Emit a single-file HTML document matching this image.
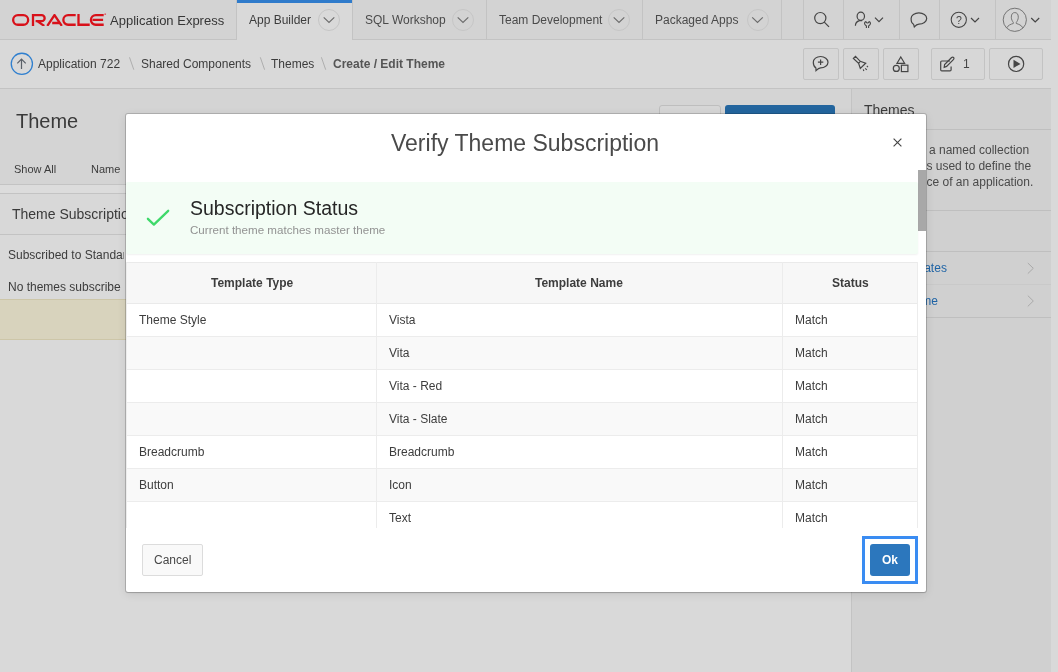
<!DOCTYPE html>
<html><head><meta charset="utf-8">
<style>
*{box-sizing:border-box;margin:0;padding:0}
html,body{width:1058px;height:672px;overflow:hidden}
body{position:relative;will-change:transform;background:#d9d9d9;font-family:"Liberation Sans",sans-serif;color:#3c3c3c}
.a{position:absolute;white-space:nowrap;line-height:1}
.hdr{position:absolute;left:0;top:0;width:1051px;height:40px;background:#d3d3d3;border-bottom:1px solid #c3c3c3}
.vsep{position:absolute;top:0;width:1px;height:39px;background:#c3c3c3}
.tab{position:absolute;top:0;height:40px}
.circ{position:absolute;width:22px;height:22px;border:1px solid #c6c6c6;border-radius:50%;top:9px}
.strip{position:absolute;left:1051px;top:0;width:7px;height:672px;background:#d9d9d9}
.bc{position:absolute;left:0;top:40px;width:1051px;height:49px;background:#d9d9d9;border-bottom:1px solid #c3c3c3}
.btn{position:absolute;top:48px;height:32px;border:1px solid #c3c3c3;border-radius:2px;background:#d7d7d7}
.side{position:absolute;left:851px;top:89px;width:200px;height:583px;background:#d0d0d0;border-left:1px solid #c3c3c3}
.hl{position:absolute;height:1px;background:#c3c3c3}
.modal{position:absolute;left:126px;top:114px;width:800px;height:478px;background:#fff;border-radius:2px;box-shadow:0 0 0 1px rgba(0,0,0,.17),0 1px 2px rgba(0,0,0,.1),0 2px 10px rgba(0,0,0,.1)}
.m{position:absolute;white-space:nowrap;line-height:1}
.cell{position:absolute;font-size:12px;line-height:1;color:#3d3d3d}
</style></head><body>
<div class="strip"></div>
<!-- header -->
<div class="hdr">
    <div class="a" style="left:110px;top:14px;font-size:13px;color:#363636">Application Express</div>
  <div class="tab" style="left:236px;width:117px;background:#d9d9d9;height:40px;border-left:1px solid #c3c3c3;border-right:1px solid #c3c3c3">
    <div style="position:absolute;left:0;right:0;top:0;height:3px;background:#2f7bcb"></div>
  </div>
  <div class="a" style="left:249px;top:14px;font-size:12px;color:#3c3c3c">App Builder</div>
  <div class="a" style="left:365px;top:14px;font-size:12px;color:#4a4a4a">SQL Workshop</div>
  <div class="vsep" style="left:486px"></div>
  <div class="a" style="left:499px;top:14px;font-size:12px;color:#4a4a4a">Team Development</div>
  <div class="vsep" style="left:642px"></div>
  <div class="a" style="left:655px;top:14px;font-size:12px;color:#4a4a4a">Packaged Apps</div>
  <div class="vsep" style="left:781px"></div>
  <div class="vsep" style="left:803px"></div>
  <div class="vsep" style="left:843px"></div>
  <div class="vsep" style="left:899px"></div>
  <div class="vsep" style="left:939px"></div>
  <div class="vsep" style="left:995px"></div>
</div>
<!-- breadcrumb -->
<div class="bc"></div>
<div class="a" style="left:38px;top:58px;font-size:12px;color:#3c3c3c">Application 722</div>
<div class="a" style="left:141px;top:58px;font-size:12px;color:#3c3c3c">Shared Components</div>
<div class="a" style="left:271px;top:58px;font-size:12px;color:#3c3c3c">Themes</div>
<div class="a" style="left:333px;top:58px;font-size:12px;font-weight:bold;color:#555">Create / Edit Theme</div>
<div class="btn" style="left:803px;width:36px"></div>
<div class="btn" style="left:843px;width:36px"></div>
<div class="btn" style="left:883px;width:36px"></div>
<div class="btn" style="left:931px;width:54px"></div>
<div class="btn" style="left:989px;width:54px"></div>
<svg style="position:absolute;left:0;top:0" width="1058" height="89" viewBox="0 0 1058 89">
 <defs><clipPath id="lc"><rect x="0" y="14" width="110" height="12"/></clipPath></defs>
 <g fill="none" stroke="#d8111a" stroke-width="2.3" clip-path="url(#lc)">
  <rect x="13.15" y="15.15" width="15" height="9.6" rx="4.8"/>
  <path d="M33 25.9V15.15H41.65A3 3 0 0 1 41.65 21.15H35.6M37.2 21.15L44.3 25.9"/>
  <path d="M47.3 25.9L54.5 15.1L61.8 25.9M52.2 23H60.2"/>
  <path d="M75.7 15.15H68.15A4.8 4.8 0 0 0 68.15 24.75H75.7"/>
  <path d="M78.5 14V24.75H89.7"/>
  <path d="M103.7 15.15H95.75A4.8 4.8 0 0 0 95.75 24.75H103.7M92.6 19.9H103.1"/>
 </g>
 <circle cx="105.2" cy="14.2" r="0.9" fill="#e06066"/>
 <g fill="none" stroke="#c6c6c6" stroke-width="1">
  <circle cx="329" cy="20" r="10.5"/><circle cx="463" cy="20" r="10.5"/><circle cx="619" cy="20" r="10.5"/><circle cx="758" cy="20" r="10.5"/>
 </g>
 <g fill="none" stroke="#6c6c6c" stroke-width="1.15">
  <path d="M323.7 17.3L329 22.5L334.3 17.3"/><path d="M457.7 17.3L463 22.5L468.3 17.3"/><path d="M613.7 17.3L619 22.5L624.3 17.3"/><path d="M752.2 17.3L757.5 22.5L762.8 17.3"/>
 </g>
 <g fill="none" stroke="#454545" stroke-width="1.2">
  <circle cx="820.3" cy="18.1" r="5.6"/><path d="M824.3 22.1L829 26.8"/>
  <ellipse cx="860.8" cy="16.3" rx="3.7" ry="4.1"/><path d="M855.4 25.8C855.4 23.5 856.5 21.5 859.5 20.6L862.1 20.7"/>
  <path d="M865.9 21.4C864 22.3 864 24.8 866.4 25.9V27.9M869.1 21.4C871 22.3 871 24.8 868.6 25.9V27.9M865.9 21.4Q867.5 24.6 869.1 21.4" stroke-width="1.1"/>
  <path d="M875 17.7L879 21.7L883 17.7"/>
  <path d="M913.5 24.3C911.5 23.2 911.1 21.7 911.1 18.5C911.1 15.4 914.6 12.9 918.9 12.9C923.2 12.9 926.7 15.4 926.7 18.5C926.7 21.6 923.2 24.1 918.9 24.1C917.8 24.1 916.5 24.3 914.3 26.9C914 25.8 913.9 25 913.5 24.3Z"/>
  <circle cx="958.8" cy="19.8" r="7.6" stroke-width="1.05"/>
  <path d="M971 18L975 22L979 18"/>
  <path d="M1031.2 18L1035.2 22L1039.2 18"/>
 </g>
 <text x="958.8" y="23.6" font-family="Liberation Sans" font-size="10.5" fill="#454545" text-anchor="middle">?</text>
 <g fill="none" stroke="#6a6a6a" stroke-width="0.9">
  <circle cx="1014.8" cy="19.8" r="11.6"/>
  <path d="M1011.3 17.2C1011.3 13.9 1012.8 12.6 1014.8 12.6C1016.8 12.6 1018.3 13.9 1018.3 17.2C1018.3 19.5 1017 21.5 1016.3 22.4V23.5C1018.8 24.2 1021.5 25.2 1022.8 27.8M1013.3 22.4C1012.6 21.5 1011.3 19.5 1011.3 17.2M1013.3 22.4V23.5C1010.8 24.2 1008.1 25.2 1006.8 27.8"/>
 </g>
 <circle cx="21.85" cy="63.85" r="10.6" fill="none" stroke="#2f7fcf" stroke-width="1.3"/>
 <path d="M21.5 69V59.3M17.3 63.4L21.5 59.2L25.7 63.4" fill="none" stroke="#5a6068" stroke-width="1.2"/>
 <g fill="none" stroke="#a8a8a8" stroke-width="0.9">
  <path d="M129.5 57.3L133.8 69.7M260.3 57.3L264.6 69.7M321.4 57.3L325.7 69.7"/>
 </g>
 <g fill="none" stroke="#454545" stroke-width="1.2">
  <path d="M815.8 67.8C814 66.8 813.3 65.2 813.3 62.2C813.3 59 816.6 56.5 820.6 56.5C824.6 56.5 828 59 828 62.2C828 65.4 824.6 67.9 820.6 67.9C819.4 67.9 818.3 68.2 816 70.7C815.9 69.6 816.1 68.6 815.8 67.8Z"/>
  <path d="M820.6 59.5V64.9M817.9 62.2H823.3"/>
  <path d="M853.4 58.4L855.5 56.4L860.2 61.3L865.7 63.3L860.3 68.4L858.6 63.4ZM860.2 61.3L858.6 63.4"/>
  <path d="M866.8 65.9L868 67.1M865.2 68.3L866.8 69.9M863.2 69.4L863.9 71" stroke-width="1.1"/>
  <path d="M900.8 57L904.6 63.3H897Z"/>
  <circle cx="896.3" cy="68.4" r="3"/>
  <rect x="901.4" y="65.2" width="6.5" height="6.4"/>
  <path d="M950 61H941.8Q940.7 61 940.7 62.1V69.7Q940.7 70.8 941.8 70.8H950Q951.1 70.8 951.1 69.7V66.5"/>
  <path d="M944.2 67.3L944.6 64.5L951.6 57.5Q952.7 56.6 953.6 57.5Q954.4 58.4 953.6 59.4L946.6 66.4Z"/>
  <circle cx="1016.1" cy="63.9" r="7.6"/>
 </g>
 <path d="M1013.5 59.8L1020.5 63.9L1013.5 68Z" fill="#454545"/>
 <text x="963" y="68.2" font-family="Liberation Sans" font-size="12" fill="#454545">1</text>
</svg>
<!-- left content -->
<div style="position:absolute;left:0;top:89px;width:851px;height:95px;background:#d4d4d4"></div>
<div class="a" style="left:16px;top:111px;font-size:20px;color:#3a3a3a">Theme</div>
<div class="a" style="left:14px;top:164px;font-size:11px;color:#3c3c3c">Show All</div>
<div class="a" style="left:91px;top:164px;font-size:11px;color:#3c3c3c">Name</div>
<div class="hl" style="left:0;top:184px;width:851px"></div>
<div style="position:absolute;left:0;top:185px;width:851px;height:8px;background:#dcdcdc"></div>
<div class="hl" style="left:0;top:193px;width:851px"></div>
<div style="position:absolute;left:0;top:194px;width:851px;height:40px;background:#d8d8d8"></div>
<div class="hl" style="left:0;top:234px;width:851px"></div>
<div class="a" style="left:12px;top:207px;font-size:14px;color:#3a3a3a">Theme Subscription</div>
<div class="a" style="left:8px;top:249px;width:116px;overflow:hidden;font-size:12px;color:#3c3c3c">Subscribed to Standard</div>
<div class="a" style="left:8px;top:281px;width:113px;overflow:hidden;font-size:12px;color:#3c3c3c">No themes subscribed</div>
<div style="position:absolute;left:0;top:299px;width:851px;height:41px;background:#d8d3bd;border-top:1px solid #cdc6a8;border-bottom:1px solid #cdc6a8"></div>
<div style="position:absolute;left:659px;top:105px;width:62px;height:30px;background:#d6d6d6;border:1px solid #bebebe;border-radius:3px"></div>
<div style="position:absolute;left:725px;top:105px;width:110px;height:30px;background:#23659e;border-radius:3px"></div>
<!-- sidebar -->
<div class="side"></div>
<div class="a" style="left:864px;top:103px;font-size:14px;color:#3c3c3c">Themes</div>
<div class="hl" style="left:852px;top:129px;width:199px;background:#bfbfbf"></div>
<div class="a" style="left:929px;top:144px;font-size:12px;color:#4a4a4a">a named collection</div>
<div class="a" style="left:926.4px;top:160px;font-size:12px;color:#4a4a4a">s used to define the</div>
<div class="a" style="left:926.5px;top:176px;font-size:12px;color:#4a4a4a">ce of an application.</div>
<div class="hl" style="left:852px;top:210px;width:199px;background:#bfbfbf"></div>
<div class="hl" style="left:852px;top:251px;width:199px;background:#bfbfbf"></div>
<div class="a" style="left:892.2px;top:262px;font-size:12px;color:#1f64a6">Templates</div>
<div class="hl" style="left:852px;top:284px;width:199px;background:#c9c9c9"></div>
<div class="a" style="left:900.6px;top:295px;font-size:12px;color:#1f64a6">Theme</div>
<svg style="position:absolute;left:1026px;top:261px" width="10" height="48" viewBox="0 0 10 48"><path d="M1.8 2L7.3 7.3L1.8 12.6M1.8 34.6L7.3 40L1.8 45.4" fill="none" stroke="#a9a9a9" stroke-width="1"/></svg>
<div class="hl" style="left:852px;top:317px;width:199px;background:#bfbfbf"></div>

<!-- modal -->
<div class="modal">
  <div class="m" style="left:265px;top:18px;font-size:23px;color:#4a4a4a">Verify Theme Subscription</div>
  <svg class="m" style="left:767px;top:24px" width="9" height="9" viewBox="0 0 9 9"><path d="M0.6 0.6L8.4 8.4M8.4 0.6L0.6 8.4" stroke="#454545" stroke-width="1.15"/></svg>
  <!-- scroll area -->
  <div style="position:absolute;left:0;top:56px;width:800px;height:358px;overflow:hidden">
    <div style="position:absolute;left:792px;top:0;width:8px;height:61px;background:#a8a8a8"></div>
    <div style="position:absolute;left:0;top:12px;width:792px;height:72px;background:#f3fdf5;border-radius:2px;box-shadow:0 1px 2px rgba(0,0,0,.06)">
      <svg style="position:absolute;left:20px;top:27px" width="24" height="18" viewBox="0 0 24 18"><path d="M1.9 9.8L7.9 15.6L22.2 1.8" fill="none" stroke="#3ed96a" stroke-width="2.3" stroke-linecap="round" stroke-linejoin="round"/></svg>
      <div class="m" style="left:64px;top:17px;font-size:19.5px;color:#262626">Subscription Status</div>
      <div class="m" style="left:64px;top:42px;font-size:11.6px;color:#929292">Current theme matches master theme</div>
    </div>
    <!-- table -->
    <div style="position:absolute;left:0;top:92px;width:792px;height:42px;background:#f7f7f7;border-top:1px solid #eaeaea;border-bottom:1px solid #eaeaea"></div>
    <div class="cell" style="left:85px;top:107px;font-weight:bold">Template Type</div>
    <div class="cell" style="left:409px;top:107px;font-weight:bold">Template Name</div>
    <div class="cell" style="left:706px;top:107px;font-weight:bold">Status</div>
    <div style="position:absolute;left:0;top:134px;width:792px;height:33px;background:#ffffff;border-bottom:1px solid #ececec"></div>
    <div class="cell" style="left:13px;top:144px">Theme Style</div>
    <div class="cell" style="left:263px;top:144px">Vista</div>
    <div class="cell" style="left:669px;top:144px">Match</div>
    <div style="position:absolute;left:0;top:167px;width:792px;height:33px;background:#f9f9f9;border-bottom:1px solid #ececec"></div>
    <div class="cell" style="left:263px;top:177px">Vita</div>
    <div class="cell" style="left:669px;top:177px">Match</div>
    <div style="position:absolute;left:0;top:200px;width:792px;height:33px;background:#ffffff;border-bottom:1px solid #ececec"></div>
    <div class="cell" style="left:263px;top:210px">Vita - Red</div>
    <div class="cell" style="left:669px;top:210px">Match</div>
    <div style="position:absolute;left:0;top:233px;width:792px;height:33px;background:#f9f9f9;border-bottom:1px solid #ececec"></div>
    <div class="cell" style="left:263px;top:243px">Vita - Slate</div>
    <div class="cell" style="left:669px;top:243px">Match</div>
    <div style="position:absolute;left:0;top:266px;width:792px;height:33px;background:#ffffff;border-bottom:1px solid #ececec"></div>
    <div class="cell" style="left:13px;top:276px">Breadcrumb</div>
    <div class="cell" style="left:263px;top:276px">Breadcrumb</div>
    <div class="cell" style="left:669px;top:276px">Match</div>
    <div style="position:absolute;left:0;top:299px;width:792px;height:33px;background:#f9f9f9;border-bottom:1px solid #ececec"></div>
    <div class="cell" style="left:13px;top:309px">Button</div>
    <div class="cell" style="left:263px;top:309px">Icon</div>
    <div class="cell" style="left:669px;top:309px">Match</div>
    <div style="position:absolute;left:0;top:332px;width:792px;height:33px;background:#ffffff;border-bottom:1px solid #ececec"></div>
    <div class="cell" style="left:263px;top:342px">Text</div>
    <div class="cell" style="left:669px;top:342px">Match</div>
    <div style="position:absolute;left:0px;top:92px;width:1px;height:300px;background:#ececec"></div>
    <div style="position:absolute;left:250px;top:92px;width:1px;height:300px;background:#ececec"></div>
    <div style="position:absolute;left:656px;top:92px;width:1px;height:300px;background:#ececec"></div>
    <div style="position:absolute;left:791px;top:92px;width:1px;height:300px;background:#ececec"></div>
  </div>
  <div class="m" style="left:16px;top:430px;width:61px;height:32px;background:#f9f9f9;border:1px solid #dcdcdc;border-radius:2px"></div>
  <div class="m" style="left:28px;top:440px;font-size:12px;color:#474747">Cancel</div>
  <div class="m" style="left:736px;top:422px;width:56px;height:48px;border:3px solid #3a8cf2"></div>
  <div class="m" style="left:744px;top:430px;width:40px;height:32px;background:#2c77bd;border-radius:3px"></div>
  <div class="m" style="left:756px;top:440px;font-size:12px;font-weight:bold;color:#fff">Ok</div>
</div>
</body></html>
